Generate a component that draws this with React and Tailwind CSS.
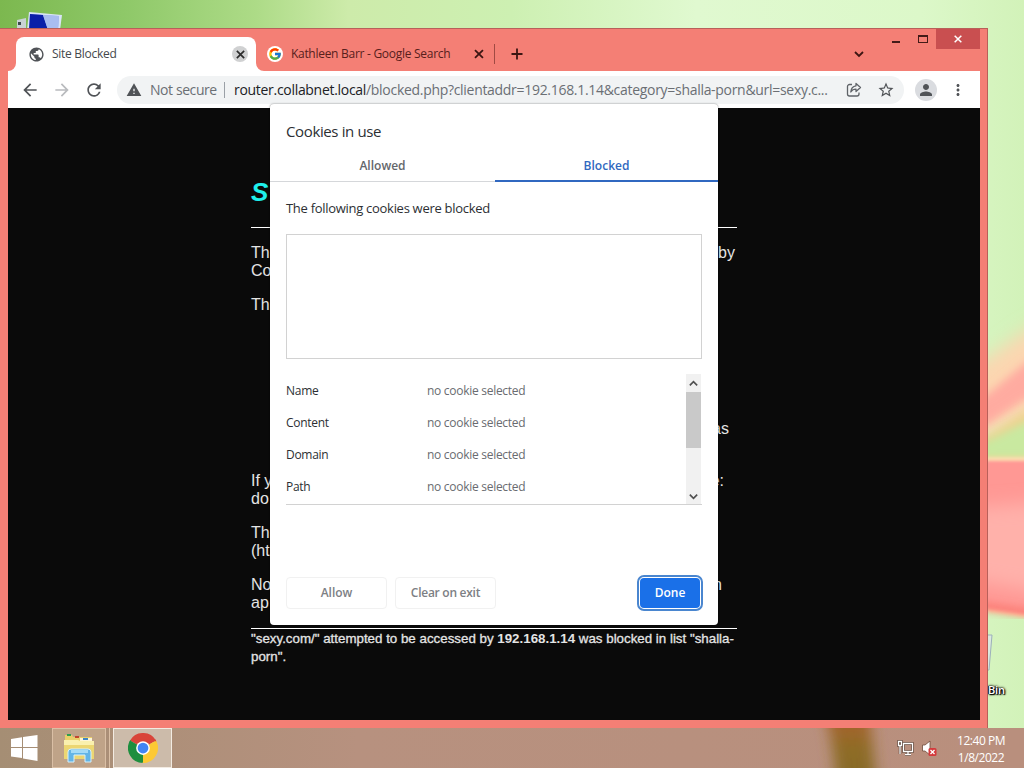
import {
  MdArrowBack,
  MdArrowForward,
  MdMoreVert,
  MdPerson,
  MdPublic,
  MdRefresh,
  MdStarBorder,
  MdWarning,
} from 'react-icons/md'
import { FcGoogle } from 'react-icons/fc'

const FIELDS = ['Name', 'Content', 'Domain', 'Path']

// small stroked glyphs: close, plus and chevrons
const GLYPHS = {
  close: 'M2 2 L10 10 M10 2 L2 10',
  plus: 'M6 0.500 V11.500 M0.500 6 H11.500',
  down: 'M2 4 L6 8 L10 4',
  up: 'M2 8 L6 4 L10 8',
}

function Glyph({ name, className }) {
  return (
    <svg className={className} viewBox="0 0 12 12" fill="none" stroke="currentColor" strokeWidth="1.8">
      <path d={GLYPHS[name]} />
    </svg>
  )
}

function Wallpaper() {
  return (
    <svg className="absolute inset-0" width="1024" height="768" viewBox="0 0 1024 768">
      <defs>
        <linearGradient id="sky" x1="0" x2="1" y1="0" y2="0">
          <stop offset="0" stopColor="#7cb84f" />
          <stop offset="0.12" stopColor="#8ec868" />
          <stop offset="0.25" stopColor="#addb87" />
          <stop offset="0.34" stopColor="#cdebaa" />
          <stop offset="0.5" stopColor="#cdf0b2" />
          <stop offset="0.68" stopColor="#e0f9d0" />
          <stop offset="0.9" stopColor="#dcf8c9" />
          <stop offset="1" stopColor="#d2f2b9" />
        </linearGradient>
        <filter id="soft" x="-50%" y="-20%" width="200%" height="140%">
          <feGaussianBlur stdDeviation="9" />
        </filter>
        <filter id="softer" x="-50%" y="-20%" width="200%" height="140%">
          <feGaussianBlur stdDeviation="4" />
        </filter>
        <filter id="edge" x="-50%" y="-20%" width="200%" height="140%">
          <feGaussianBlur stdDeviation="1.5" />
        </filter>
      </defs>
      <rect width="1024" height="768" fill="url(#sky)" />
      <path d="M940 385 L988 358 L1024 332 L1070 305 V400 L988 436 L940 450Z" fill="#fcd6b0" filter="url(#soft)" />
      <path d="M940 412 L988 394 L1024 364 L1070 335 V385 L1024 400 L988 424 L940 445Z" fill="#ffaba0" filter="url(#softer)" />
      <path d="M940 451 L988 436 L1024 412 L1070 390 V460 H940Z" fill="#f3cf8e" filter="url(#softer)" />
      <path d="M940 452 L988 440 L1024 422 L1070 405 V458 H940Z" fill="#c9e9a0" filter="url(#softer)" />
      <path d="M940 457 H1070 V621 L1024 617 L988 612 L940 602Z" fill="#fbdcae" filter="url(#edge)" />
      <path d="M940 461 H1070 V616 L1024 614 L988 609 L940 600Z" fill="#ff9894" filter="url(#edge)" />
      <path d="M940 510 L1070 500 V600 L1024 590 L940 575Z" fill="#ffb1aa" filter="url(#soft)" />
      <path d="M940 597 L988 607 L1024 612 L1070 615" fill="none" stroke="#fa766c" strokeWidth="6" filter="url(#softer)" />
    </svg>
  )
}

function ComputerIcon() {
  return (
    <svg className="absolute left-[16px] top-[10px]" width="48" height="20" viewBox="0 0 48 20">
      <path d="M1 10 L10 8 V20 H1Z" fill="#c9d3d4" />
      <rect x="2" y="12" width="3" height="3" fill="#3d4a4c" />
      <path d="M13 2 L46 5 L44 20 H11Z" fill="#d9e4f7" />
      <path d="M14 4 L43 6 L42 20 H13Z" fill="#8fa9e8" />
      <path d="M14 4 L27 5 L32 20 H13Z" fill="#0a1fa8" />
      <path d="M27 5 L43 6 L42 20 H32Z" fill="#a9bdf0" />
    </svg>
  )
}

function ShareIcon() {
  return (
    <svg width="16" height="16" viewBox="0 0 16 16" fill="none" stroke="#5f6368" strokeWidth="1.3" strokeLinejoin="round">
      <path d="M6 2.500 H3.500 A2 2 0 0 0 1.500 4.500 V12 A2 2 0 0 0 3.500 14 H11 A2 2 0 0 0 13 12 V10.500" />
      <path d="M10 1.500 L14.500 5.500 L10 9.500 V7.200 C7.500 7.200 6 8 4.800 10 C5 7 6.800 4.200 10 3.800Z" />
    </svg>
  )
}

function ChromeIcon() {
  return (
    <svg width="30" height="30" viewBox="0 0 48 48">
      <path d="M24 24 L3.2 12 A24 24 0 0 1 44.8 12Z" fill="#d9453a" />
      <path d="M24 24 L44.8 12 A24 24 0 0 1 24 48Z" fill="#fcc934" />
      <path d="M24 24 V48 A24 24 0 0 1 3.2 12Z" fill="#1e8e3e" />
      <path d="M24 13 H45.3 L44 10.5 H24Z" fill="#d9453a" />
      <path d="M14.5 29.5 L3.7 11.2 L2 15Z" fill="#1e8e3e" />
      <path d="M33.5 29.5 L23 48 L31 46.8 L36 30Z" fill="#fcc934" />
      <circle cx="24" cy="24" r="11" fill="#fff" />
      <circle cx="24" cy="24" r="8.6" fill="#4285f4" />
    </svg>
  )
}

function FolderIcon() {
  return (
    <svg width="32" height="30" viewBox="0 0 32 30">
      <path d="M2 2 H9 L10 4 H29 V9 H2Z" fill="#e9cf6a" />
      <rect x="4" y="1" width="4" height="2" fill="#2f9e4f" />
      <rect x="12" y="3" width="4" height="2" fill="#c2452f" />
      <path d="M17 5 H29 V8 H17Z" fill="#fdf6d8" />
      <rect x="20" y="5" width="5" height="2" fill="#3f87c4" />
      <path d="M1 7 H15 L17 8 H31 V26 H1Z" fill="#ecd672" />
      <path d="M1 7 H15 L17 8 H31 V12 H1Z" fill="#faf0ae" />
      <path d="M5 29 V19 Q5 16 8 16 H25 Q28 16 28 19 V29 H22 V22 H11 V29Z" fill="#63b5e6" stroke="#d6f0fb" />
      <path d="M8 17 H25 V20 H8Z" fill="#a4dbf6" />
    </svg>
  )
}

function TabStrip() {
  return (
    <div className="flex h-[43px] shrink-0">
      <div className="relative mt-[9px] ml-2 flex h-[34px] w-[240px] items-center rounded-t-lg bg-white pr-2 pl-3">
        {/* curved feet of the active tab */}
        <svg className="absolute bottom-0 -left-2" width="8" height="8">
          <path d="M8 0 V8 H0 A8 8 0 0 0 8 0Z" fill="#fff" />
        </svg>
        <svg className="absolute -right-2 bottom-0" width="8" height="8">
          <path d="M0 0 V8 H8 A8 8 0 0 1 0 0Z" fill="#fff" />
        </svg>
        <MdPublic className="size-[17px] text-[#505357]" />
        <span className="ml-[7px] flex-1 text-[12px] tracking-[-0.28px] text-[#45484c]">Site Blocked</span>
        <span className="flex size-4 items-center justify-center rounded-full bg-[#d0d1d2]">
          <Glyph name="close" className="size-[11px] text-[#2b2b2b]" />
        </span>
      </div>
      <div className="mt-[9px] flex h-[34px] w-[239px] items-center pl-[11px]">
        <span className="flex size-4 items-center justify-center rounded-full bg-white">
          <FcGoogle className="size-[14px]" />
        </span>
        <span className="ml-2 w-[183px] text-[12px] tracking-[-0.28px] whitespace-nowrap text-[#57201c]">
          Kathleen Barr - Google Search
        </span>
        <Glyph name="close" className="size-3 text-[#3c1512]" />
        <span className="ml-[9px] h-5 w-px bg-[#a04a43]" />
      </div>
      <Glyph name="plus" className="mt-5 ml-4 size-3 text-[#3c1512]" />
      <div className="flex-1" />
      <Glyph name="down" className="mt-5 mr-[27px] size-3 text-[#3c1512]" />
      <div className="flex h-[21px] items-start">
        <span className="mt-[13px] mr-[18px] h-[2px] w-2 bg-[#431b18]" />
        <span className="mt-[7px] mr-2 h-2 w-[10px] border border-t-2 border-[#431b18]" />
        <span className="mt-px flex h-5 w-[44px] items-center justify-center bg-[#c94f50]">
          <Glyph name="close" className="size-[10px] text-white" />
        </span>
      </div>
    </div>
  )
}

function Toolbar() {
  return (
    <div className="flex h-[37px] shrink-0 items-center bg-white pl-[13px] text-[#505357]">
      <MdArrowBack className="size-5 -ml-px" />
      <MdArrowForward className="ml-3 size-5 text-[#b9bbbe]" />
      <MdRefresh className="ml-3 size-5" />
      <div className="ml-[13px] flex h-7 w-[787px] items-center rounded-full bg-[#f1f3f4] pl-[9px] text-[14px] whitespace-nowrap">
        <MdWarning className="size-4" />
        <span className="ml-2 w-[67px] tracking-[-0.42px] text-[#6b6f74]">Not secure</span>
        <span className="mr-[9px] ml-[7px] h-4 w-px bg-[#9aa0a6]" />
        <span className="w-[612px] tracking-[-0.3px] text-[#6b6f74]">
          <span className="text-[#202124]">router.collabnet.local</span>
          /blocked.php?clientaddr=192.168.1.14&amp;category=shalla-porn&amp;url=sexy.c...
        </span>
        <ShareIcon />
        <MdStarBorder className="ml-[15px] size-[18px]" />
      </div>
      <span className="ml-[11px] flex size-[22px] items-center justify-center rounded-full bg-[#dadce0]">
        <MdPerson className="size-[18px]" />
      </span>
      <MdMoreVert className="ml-3 size-[18px]" />
    </div>
  )
}

function BlockedPage() {
  return (
    <div className="flex-1 bg-[#0a0a0a] pl-[243px] font-['Liberation_Sans',sans-serif] text-[16px] leading-[18px] text-[#e4e4e4]">
      <div className="w-[486px] pt-[69px]">
        <h1 className="h-[50px] text-[26px] leading-[30px] font-bold text-[#1ff0ec] italic">S</h1>
        <hr className="border-white" />
        <p className="mt-4 flex justify-between pr-[2px]">
          <span>Th<br />Co</span>
          <span>by</span>
        </p>
        <p className="mt-4">Th</p>
        <p className="mt-[106px] pr-2 text-right">as</p>
        <p className="mt-[34px] flex justify-between pr-[13px]">
          <span>If y<br />do</span>
          <span>e:</span>
        </p>
        <p className="mt-4">Th<br />(ht</p>
        <p className="mt-4 flex justify-between pr-[15px]">
          <span>No<br />ap</span>
          <span>n</span>
        </p>
        <hr className="mt-4 border-white" />
        <p className="pt-px text-[13.33px] whitespace-nowrap [-webkit-text-stroke:0.3px]">
          "sexy.com/" attempted to be accessed by <b className="[-webkit-text-stroke:0]">192.168.1.14</b> was blocked in
          list "shalla-
          <br />
          porn".
        </p>
      </div>
    </div>
  )
}

function CookieDialog() {
  return (
    <div className="absolute top-[104px] left-[270px] flex h-[521px] w-[448px] flex-col rounded bg-white text-[12px] text-[#2c2f33] shadow-[0_0_2px_rgba(0,0,0,0.5)]">
      <h2 className="mt-[15px] ml-4 text-[15px] leading-[24px] tracking-[-0.37px]">Cookies in use</h2>
      <div className="mt-[7px] flex h-8 text-center leading-[32px] font-semibold">
        <span className="w-[225px] border-b border-[#d5d7da] text-[#64676b]">Allowed</span>
        <span className="w-[223px] border-b-2 border-[#3068c0] text-[#3068c0]">Blocked</span>
      </div>
      <p className="mt-4 ml-4 text-[13px] leading-5 tracking-[-0.29px]">The following cookies were blocked</p>
      <div className="mx-4 mt-4 h-[125px] shrink-0 border border-[#d2d2d2]" />
      <div className="mx-4 mt-[15px] flex h-[131px] shrink-0 border-b border-[#d2d2d2]">
        <dl className="flex-1 pt-px">
          {FIELDS.map((name) => (
            <div key={name} className="flex h-8 items-center tracking-[-0.28px]">
              <dt className="w-[141px]">{name}</dt>
              <dd className="text-[#696c70]">no cookie selected</dd>
            </div>
          ))}
        </dl>
        <div className="mr-px flex w-[15px] flex-col items-center bg-[#f1f1f1] text-[#505050]">
          <Glyph name="up" className="mt-1 mb-[3px] size-[11px] shrink-0" />
          <div className="h-14 w-full bg-[#c9c9c9]" />
          <div className="flex-1" />
          <Glyph name="down" className="mb-[2px] size-[11px] shrink-0" />
        </div>
      </div>
      <div className="mt-[72px] ml-4 flex h-8 font-semibold text-[#7d8084]">
        <button className="w-[101px] rounded border border-[#f1f1f1]">Allow</button>
        <button className="ml-2 w-[101px] rounded border border-[#f1f1f1] tracking-[-0.27px]">Clear on exit</button>
        <button className="mt-px ml-[144px] h-[30px] w-[60px] rounded-sm bg-[#1a70e8] text-white outline-2 outline-offset-1 outline-[#4a86cf]">
          Done
        </button>
      </div>
    </div>
  )
}

function Taskbar() {
  return (
    <div className="absolute inset-x-0 bottom-0 flex h-10 items-center overflow-hidden bg-linear-to-r from-[#a58e74] via-[#b7917f] via-35% to-[#b98f7d] text-white">
      {/* flower stem showing through the glass */}
      <svg className="absolute left-[790px]" width="110" height="40" viewBox="0 0 110 40">
        <defs>
          <linearGradient id="stem" x1="0" x2="0" y1="0" y2="1">
            <stop offset="0" stopColor="#a8622c" />
            <stop offset="0.5" stopColor="#8f6c27" />
            <stop offset="1" stopColor="#866b26" />
          </linearGradient>
          <filter id="stemBlur" x="-50%" y="-50%" width="200%" height="200%">
            <feGaussianBlur stdDeviation="7 3" />
          </filter>
        </defs>
        <path d="M36 -10 H80 L86 50 H46 Q42 10 36 -10Z" fill="url(#stem)" filter="url(#stemBlur)" />
      </svg>
      <svg className="ml-[10px]" width="28" height="28" viewBox="0 0 28 28" fill="#fff">
        <path d="M1 5 L12 3.2 V13 H1Z M13 3 L27.500 1 V13 H13Z M1 14 H12 V24 L1 22.500Z M13 14 H27.500 V27 L13 24.500Z" />
      </svg>
      <span className="ml-[14px] flex h-10 w-[54px] items-center justify-center border border-[#dabfa5] bg-[#bfa388]">
        <FolderIcon />
      </span>
      <span className="h-10 w-1 border-r border-[#dabfa5]" />
      <span className="ml-[3px] flex h-10 w-[59px] items-center justify-center border border-[#f3ebe2] bg-[#ccbbaa]">
        <ChromeIcon />
      </span>
      <svg className="relative mr-[7px] ml-auto" width="17" height="17" viewBox="0 0 17 17" fill="none">
        <path d="M6.500 3.500 H15.500 V11.500 H6.500Z M11 12 V14 M8 14.500 H14 M3 5 V14 M1.500 1.500 H4.500 V5.500 H1.500Z" stroke="#4a3428" strokeWidth="2.4" />
        <path d="M6.500 3.500 H15.500 V11.500 H6.500Z M11 12 V14 M8 14.500 H14 M3 5 V14 M1.500 1.500 H4.500 V5.500 H1.500Z" stroke="#fff" strokeWidth="1.3" />
      </svg>
      <svg className="relative mr-[19px]" width="17" height="17" viewBox="0 0 17 17">
        <path d="M1.500 5 H4 L9 1 V15 L4 11 H1.500Z" fill="#fff" stroke="#6e4d3c" strokeWidth="0.8" />
        <rect x="7.500" y="8" width="8" height="8" rx="1.500" fill="#d33a3c" />
        <path d="M9.500 10 L13.500 14 M13.500 10 L9.500 14" stroke="#fff" strokeWidth="1.300" />
      </svg>
      <div className="relative mt-px mr-[19px] w-[48px] text-center text-[12px] leading-[17px] tracking-[-0.45px] whitespace-nowrap">
        12:40 PM
        <br />
        1/8/2022
      </div>
    </div>
  )
}

export default function App() {
  return (
    <div className="relative h-[768px] w-[1024px] overflow-hidden font-['Open_Sans','Noto_Sans',sans-serif]">
      <Wallpaper />
      <ComputerIcon />

      {/* Recycle bin, mostly hidden behind the window */}
      <svg className="absolute top-[632px] left-[984px]" width="10" height="44" viewBox="0 0 10 44">
        <path d="M0 3 L8 3 L5 38 H0Z" fill="#dce9e0" stroke="#9cb0bb" />
      </svg>
      <span className="absolute top-[681px] left-[988px] text-[11px] leading-[18px] font-semibold tracking-[-0.2px] text-white [text-shadow:0_0_2px_#000,1px_1px_1px_#000,-1px_0_1px_#000,0_0_3px_#000]">
        Bin
      </span>

      {/* Browser window */}
      <div className="absolute top-[28px] left-0 flex h-[700px] w-[988px] flex-col border-t border-r border-[#b8605a] bg-[#f47f75] pr-[7px] pb-2 pl-2">
        <div className="-mt-px flex flex-1 flex-col">
          <TabStrip />
          <Toolbar />
          <BlockedPage />
        </div>
      </div>

      <CookieDialog />
      <Taskbar />
    </div>
  )
}
